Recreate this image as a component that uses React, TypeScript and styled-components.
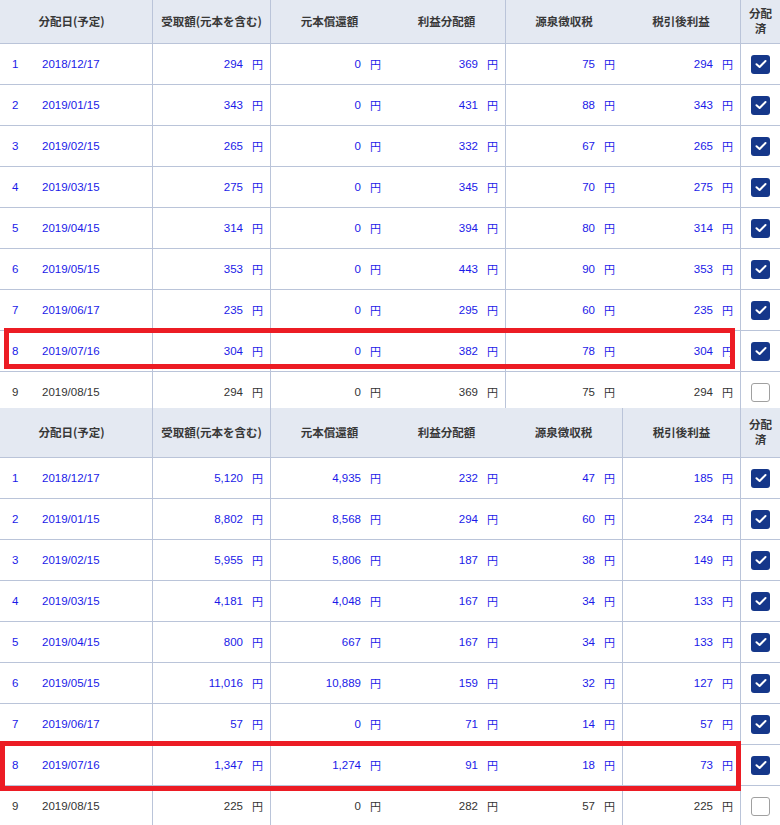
import React from "react";
import styled, { createGlobalStyle } from "styled-components";

const GlobalStyle = createGlobalStyle`
  html, body { margin: 0; padding: 0; background: #ffffff; }
  body { font-family: "Liberation Sans", "Noto Sans CJK JP", sans-serif; }
`;

const COLS = "42px 110px 118px 118px 117px 117px 118px 40px";
const LINE = "#bac4d9";

type Row = {
  no: number;
  date: string;
  vals: string[];
  checked: boolean;
};

const Page = styled.div`
  width: 780px;
  display: flex;
  flex-direction: column;
`;

const Block = styled.div<{ $h: number }>`
  position: relative;
  height: ${(p) => p.$h}px;
  overflow: hidden;
`;

const Header = styled.div<{ $h: number }>`
  display: grid;
  grid-template-columns: ${COLS};
  height: ${(p) => p.$h}px;
  background: #e4e9f2;
  border-bottom: 1px solid ${LINE};
`;

const HeadCell = styled.div<{ $span?: number; $line?: boolean; $shift?: number; $gap?: number }>`
  grid-column: span ${(p) => p.$span ?? 1};
  box-sizing: border-box;
  display: flex;
  flex-direction: column;
  align-items: center;
  justify-content: center;
  gap: ${(p) => p.$gap ?? 0}px;
  text-align: center;
  border-left: ${(p) => (p.$line ? `1px solid ${LINE}` : "none")};
  padding-right: ${(p) => p.$shift ?? 0}px;
  padding-bottom: 2px;
  font-family: "Noto Sans CJK JP", sans-serif;
  font-weight: 700;
  font-size: 11.5px;
  line-height: 14px;
  color: #383838;
  white-space: nowrap;
`;

const HeadLine = styled.span`
  display: block;
  line-height: 12px;
  height: 12px;
  font-size: 11.5px;
`;

const RowLine = styled.div`
  display: grid;
  grid-template-columns: ${COLS};
  height: 40px;
  border-bottom: 1px solid ${LINE};
`;

const Cell = styled.div<{ $line?: boolean; $dim?: boolean }>`
  box-sizing: border-box;
  display: flex;
  align-items: center;
  border-left: ${(p) => (p.$line ? `1px solid ${LINE}` : "none")};
  font-size: 11.5px;
  color: ${(p) => (p.$dim ? "#333333" : "#1a1ae8")};
  white-space: nowrap;
`;

const NoCell = styled(Cell)`
  padding-left: 12px;
`;

const DateCell = styled(Cell)`
  padding-left: 0;
`;

const NumCell = styled(Cell)`
  justify-content: flex-end;
  padding-right: 7px;
`;

const Yen = styled.span`
  font-family: "Noto Sans CJK JP", sans-serif;
  font-size: 11px;
  margin-left: 9px;
`;

const CheckCell = styled(Cell)`
  justify-content: center;
`;

const Box = styled.div<{ $on: boolean }>`
  width: 19px;
  height: 19px;
  box-sizing: border-box;
  border-radius: 3px;
  display: flex;
  align-items: center;
  justify-content: center;
  background: ${(p) => (p.$on ? "#15378a" : "#ffffff")};
  border: ${(p) => (p.$on ? "none" : "1px solid #a0a0a0")};
`;

const Highlight = styled.div<{ $l: number; $t: number; $w: number; $h: number }>`
  position: absolute;
  left: ${(p) => p.$l}px;
  top: ${(p) => p.$t}px;
  width: ${(p) => p.$w}px;
  height: ${(p) => p.$h}px;
  box-sizing: border-box;
  border: 5px solid #ec1c24;
  pointer-events: none;
`;

const HEADS = ["受取額(元本を含む)", "元本償還額", "利益分配額", "源泉徴収税", "税引後利益"];

const t1: Row[] = [
  { no: 1, date: "2018/12/17", vals: ["294", "0", "369", "75", "294"], checked: true },
  { no: 2, date: "2019/01/15", vals: ["343", "0", "431", "88", "343"], checked: true },
  { no: 3, date: "2019/02/15", vals: ["265", "0", "332", "67", "265"], checked: true },
  { no: 4, date: "2019/03/15", vals: ["275", "0", "345", "70", "275"], checked: true },
  { no: 5, date: "2019/04/15", vals: ["314", "0", "394", "80", "314"], checked: true },
  { no: 6, date: "2019/05/15", vals: ["353", "0", "443", "90", "353"], checked: true },
  { no: 7, date: "2019/06/17", vals: ["235", "0", "295", "60", "235"], checked: true },
  { no: 8, date: "2019/07/16", vals: ["304", "0", "382", "78", "304"], checked: true },
  { no: 9, date: "2019/08/15", vals: ["294", "0", "369", "75", "294"], checked: false },
];

const t2: Row[] = [
  { no: 1, date: "2018/12/17", vals: ["5,120", "4,935", "232", "47", "185"], checked: true },
  { no: 2, date: "2019/01/15", vals: ["8,802", "8,568", "294", "60", "234"], checked: true },
  { no: 3, date: "2019/02/15", vals: ["5,955", "5,806", "187", "38", "149"], checked: true },
  { no: 4, date: "2019/03/15", vals: ["4,181", "4,048", "167", "34", "133"], checked: true },
  { no: 5, date: "2019/04/15", vals: ["800", "667", "167", "34", "133"], checked: true },
  { no: 6, date: "2019/05/15", vals: ["11,016", "10,889", "159", "32", "127"], checked: true },
  { no: 7, date: "2019/06/17", vals: ["57", "0", "71", "14", "57"], checked: true },
  { no: 8, date: "2019/07/16", vals: ["1,347", "1,274", "91", "18", "73"], checked: true },
  { no: 9, date: "2019/08/15", vals: ["225", "0", "282", "57", "225"], checked: false },
];

const Check = () => (
  <svg width="12" height="10" viewBox="0 0 12 10">
    <polyline points="1.5,5.2 4.6,8 10.5,2" fill="none" stroke="#ffffff" strokeWidth="2" strokeLinecap="round" strokeLinejoin="round" />
  </svg>
);

function Table({ rows, lines, headH }: { rows: Row[]; lines: number[]; headH: number }) {
  // lines: indices of the five value columns (0..4) that carry a left rule
  return (
    <>
      <Header $h={headH}>
        <HeadCell $span={2} $shift={9}>分配日(予定)</HeadCell>
        {HEADS.map((h, i) => (
          <HeadCell key={h} $line={lines.includes(i)}>{h}</HeadCell>
        ))}
        <HeadCell $line $gap={3}>
          <HeadLine>分配</HeadLine>
          <HeadLine>済</HeadLine>
        </HeadCell>
      </Header>
      {rows.map((r) => {
        const dim = !r.checked;
        return (
          <RowLine key={r.no}>
            <NoCell $dim={dim}>{r.no}</NoCell>
            <DateCell $dim={dim}>{r.date}</DateCell>
            {r.vals.map((v, i) => (
              <NumCell key={i} $dim={dim} $line={lines.includes(i)}>
                {v}
                <Yen>円</Yen>
              </NumCell>
            ))}
            <CheckCell $line>
              <Box $on={r.checked}>{r.checked && <Check />}</Box>
            </CheckCell>
          </RowLine>
        );
      })}
    </>
  );
}

export default function App() {
  return (
    <Page>
      <GlobalStyle />
      <Block $h={408}>
        <Table rows={t1} lines={[0, 1, 3]} headH={43} />
        <Highlight $l={4} $t={328} $w={731} $h={41} />
      </Block>
      <Block $h={417}>
        <Table rows={t2} lines={[0, 1, 4]} headH={49} />
        <Highlight $l={0} $t={333} $w={741} $h={50} />
      </Block>
    </Page>
  );
}
